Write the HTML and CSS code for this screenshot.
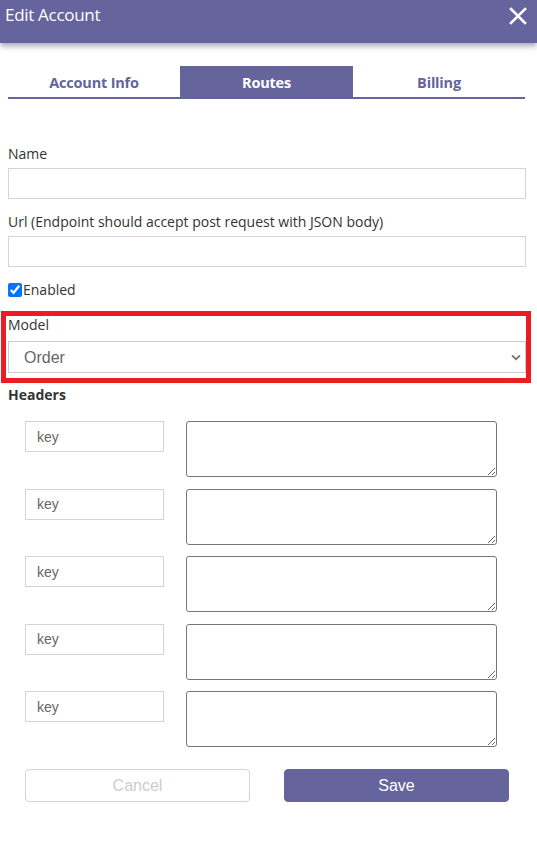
FILE: index.html
```html
<!DOCTYPE html>
<html>
<head>
<meta charset="utf-8">
<link rel="stylesheet" href="styles.css">
</head>
<body>
<div class="header">
  <div class="title">Edit Account</div>
  <svg class="close" width="18" height="18" viewBox="0 0 18 18"><path d="M2 2 L16 16 M16 2 L2 16" stroke="#fff" stroke-width="2.6" stroke-linecap="square"/></svg>
</div>
<div class="content">
  <div class="tabs">
    <div class="tab">Account Info</div>
    <div class="tab active">Routes</div>
    <div class="tab">Billing</div>
  </div>
  <div class="form">
    <label class="label">Name</label>
    <input class="input" type="text">
    <label class="label url">Url (Endpoint should accept post request with JSON body)</label>
    <input class="input" type="text">
    <label class="check"><input type="checkbox" checked>Enabled</label>
    <div class="model">
      <label class="label model-label">Model</label>
      <div class="select-wrap">
        <select class="select"><option>Order</option></select>
        <svg class="chev" width="10" height="7" viewBox="0 0 10 7"><path d="M1 1.5 L5 5.2 L9 1.5" fill="none" stroke="#777" stroke-width="1.8"/></svg>
      </div>
      <div class="annot"></div>
    </div>
    <div class="headers">Headers</div>
    <div class="rows">
      <div class="row"><input class="key" type="text" placeholder="key"><textarea class="val"></textarea></div>
      <div class="row"><input class="key" type="text" placeholder="key"><textarea class="val"></textarea></div>
      <div class="row"><input class="key" type="text" placeholder="key"><textarea class="val"></textarea></div>
      <div class="row"><input class="key" type="text" placeholder="key"><textarea class="val"></textarea></div>
      <div class="row"><input class="key" type="text" placeholder="key"><textarea class="val"></textarea></div>
    </div>
    <div class="buttons">
      <button class="btn cancel">Cancel</button>
      <button class="btn save">Save</button>
    </div>
  </div>
</div>
</body>
</html>
```
FILE: styles.css
```css
* { box-sizing: border-box; }
html, body { margin: 0; padding: 0; background: #fff; }
body { font-family: "Open Sans", "Noto Sans", sans-serif; color: #333; width: 537px; height: 865px; overflow: hidden; }

.header {
  height: 43px;
  background: #65649c;
  box-shadow: 0 3px 6px rgba(0,0,0,0.35);
  display: flex;
  justify-content: space-between;
  align-items: flex-start;
  padding: 4px 10px 0 5px;
}
.title { color: #fff; font-size: 17px; line-height: 22px; letter-spacing: -0.3px; }
.close { margin-top: 3px; }

.content { padding: 23px 12px 0 8px; }

.tabs {
  display: grid;
  grid-template-columns: 172px 173px 172px;
  border-bottom: 2px solid #65649c;
}
.tab {
  height: 31px;
  display: flex;
  align-items: center;
  justify-content: center;
  font-weight: 700;
  font-size: 14.5px;
  color: #65649c;
  letter-spacing: -0.2px;
  padding-top: 1px;
}
.tab.active { background: #65649c; color: #fff; }

.form { display: flex; flex-direction: column; padding-top: 45px; }
.label { display: block; font-size: 14px; line-height: 20px; color: #333; }
.input {
  display: block;
  width: 518px;
  height: 31px;
  margin-top: 4px;
  border: 1px solid #d4d4d4;
  outline: none;
}
.url { margin-top: 13px; }
.check {
  display: flex;
  align-items: center;
  gap: 1px;
  margin-top: 13px;
  font-size: 14px;
  line-height: 20px;
}
.check input { margin: 0; width: 14px; height: 14px; accent-color: #0075ff; }

.model { position: relative; margin-top: 15px; }
.select-wrap { position: relative; margin-top: 6px; width: 518px; }
.select {
  appearance: none;
  -webkit-appearance: none;
  display: block;
  width: 518px;
  height: 32px;
  border: 1px solid #ccc;
  border-radius: 0;
  background: #fff;
  font-family: "Liberation Sans", Arial, sans-serif;
  font-size: 16px;
  color: #666;
  padding: 0 0 0 15px;
  outline: none;
}
.chev { position: absolute; right: 5px; top: 13px; }
.annot {
  position: absolute;
  left: -7px;
  top: -4px;
  width: 530px;
  height: 72px;
  border: 5px solid #ed1c24;
  pointer-events: none;
}

.headers { margin-top: 12px; font-weight: 700; font-size: 14px; line-height: 20px; color: #333; }

.rows { display: flex; flex-direction: column; gap: 11.5px; padding-top: 16px; padding-left: 17px; }
.row { display: flex; align-items: flex-start; gap: 22px; }
.key {
  width: 139px;
  height: 31px;
  border: 1px solid #d4d4d4;
  padding: 0 11px;
  font-family: "Liberation Sans", Arial, sans-serif;
  font-size: 14px;
  outline: none;
}
.key::placeholder { color: #666; }
.val {
  width: 311px;
  height: 56px;
  border: 1px solid #767676;
  border-radius: 3px;
  margin: 0;
  outline: none;
  resize: vertical;
}

.buttons { display: flex; gap: 34px; padding-left: 17px; margin-top: 22px; }
.btn {
  width: 225px;
  height: 33px;
  border-radius: 4px;
  font-family: "Liberation Sans", Arial, sans-serif;
  font-size: 16px;
  padding: 0;
}
.cancel { background: #fff; border: 1px solid #d4d4d4; color: #ccc; }
.save { background: #65649c; border: 1px solid #65649c; color: #fff; }
```
